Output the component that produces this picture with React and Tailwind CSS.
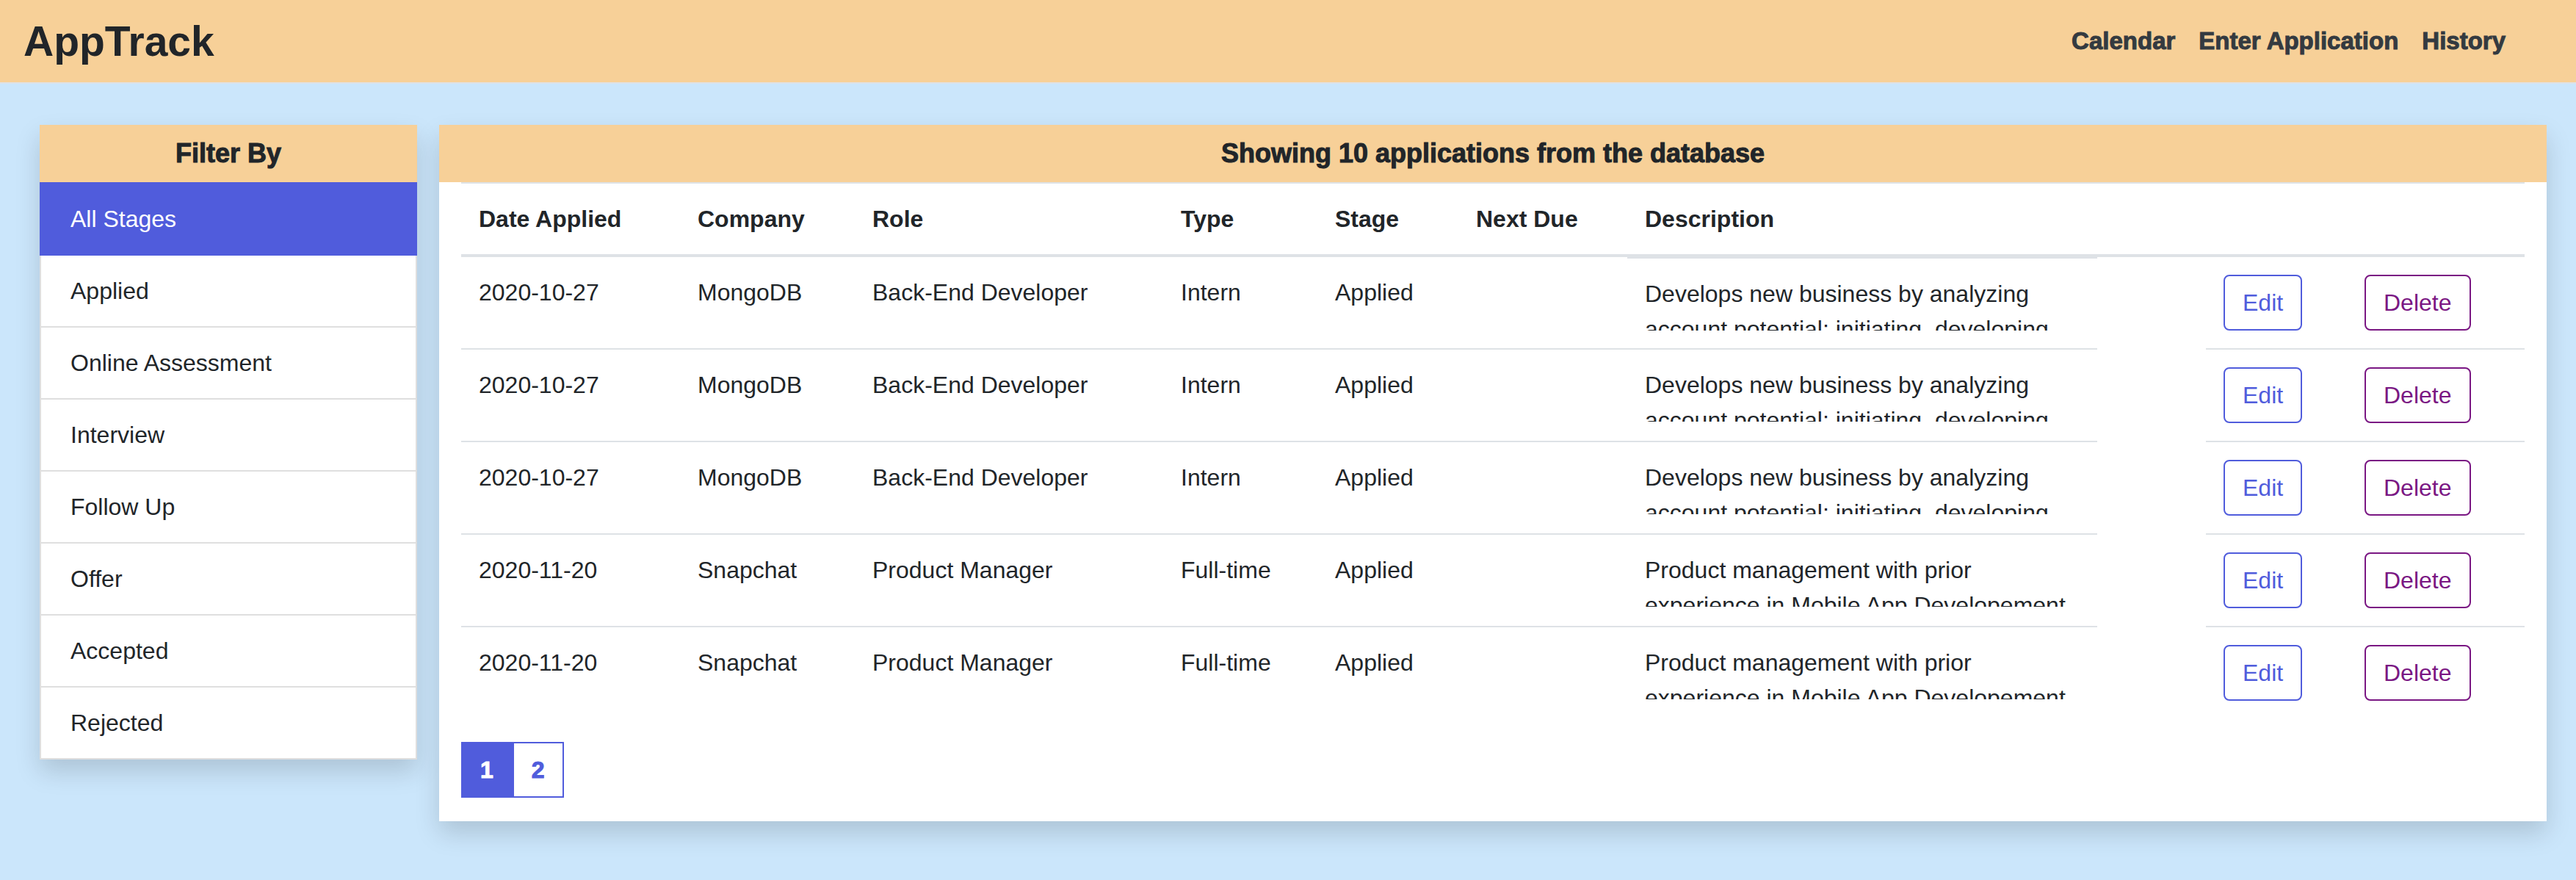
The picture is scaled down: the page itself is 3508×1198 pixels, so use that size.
const stages = [
  "All Stages",
  "Applied",
  "Online Assessment",
  "Interview",
  "Follow Up",
  "Offer",
  "Accepted",
  "Rejected",
];

const sales =
  "Develops new business by analyzing account potential; initiating, developing, and closing sales.";
const product =
  "Product management with prior experience in Mobile App Developement";

const applications = [
  { id: 1, date: "2020-10-27", company: "MongoDB", role: "Back-End Developer", type: "Intern", stage: "Applied", description: sales },
  { id: 2, date: "2020-10-27", company: "MongoDB", role: "Back-End Developer", type: "Intern", stage: "Applied", description: sales },
  { id: 3, date: "2020-10-27", company: "MongoDB", role: "Back-End Developer", type: "Intern", stage: "Applied", description: sales },
  { id: 4, date: "2020-11-20", company: "Snapchat", role: "Product Manager", type: "Full-time", stage: "Applied", description: product },
  { id: 5, date: "2020-11-20", company: "Snapchat", role: "Product Manager", type: "Full-time", stage: "Applied", description: product },
];

const columns = [
  { label: "Date Applied", width: "w-[298px]" },
  { label: "Company", width: "w-[238px]" },
  { label: "Role", width: "w-[420px]" },
  { label: "Type", width: "w-[210px]" },
  { label: "Stage", width: "w-[192px]" },
  { label: "Next Due", width: "w-[230px]" },
  { label: "Description", width: "" },
  { label: "", width: "w-[192px]" },
  { label: "", width: "w-[242px]" },
];

function Header() {
  return (
    <header className="flex items-center justify-between border-b-2 border-[#dee2e6] bg-[#f7d098] py-3.5 pl-8 pr-20">
      <a href="#" className="text-[57px] font-bold leading-[84px]">
        AppTrack
      </a>
      <nav className="flex text-[33px] font-bold leading-[48px] text-[#343a40] [-webkit-text-stroke:1px_#343a40]">
        <a href="#calendar" className="px-4">Calendar</a>
        <a href="#enter" className="px-4">Enter Application</a>
        <a href="#history" className="px-4">History</a>
      </nav>
    </header>
  );
}

function CardTitle({ children }) {
  return (
    <h2 className="bg-[#f7d098] py-3 text-center text-[36px] font-bold leading-[54px] [-webkit-text-stroke:1px_#212529]">
      {children}
    </h2>
  );
}

function Filters() {
  return (
    <aside className="w-[514px] shrink-0 bg-white shadow-[0_16px_32px_rgba(0,0,0,0.15)]">
      <CardTitle>Filter By</CardTitle>
      <ul>
        {stages.map((stage, i) => (
          <li key={stage}>
            <button
              type="button"
              className={
                i === 0
                  ? "block w-full border-2 border-[#505cdc] bg-[#505cdc] px-10 py-6 text-left text-white"
                  : "block w-full border-x-2 border-b-2 border-[#dfdfdf] bg-white px-10 py-6 text-left"
              }
            >
              {stage}
            </button>
          </li>
        ))}
      </ul>
    </aside>
  );
}

function Row({ app, first }) {
  const line = first ? "" : "border-t-2 border-[#dee2e6]";
  return (
    <tr className="align-top">
      <td className={`p-6 ${line}`}>{app.date}</td>
      <td className={`p-6 ${line}`}>{app.company}</td>
      <td className={`p-6 ${line}`}>{app.role}</td>
      <td className={`p-6 ${line}`}>{app.type}</td>
      <td className={`p-6 ${line}`}>{app.stage}</td>
      <td className={`p-6 ${line}`}></td>
      <td className="p-0">
        <div className="max-w-[640px] border-t-2 border-[#dee2e6] px-6 pt-6">
          <p className="h-[74px] overflow-hidden">{app.description}</p>
        </div>
      </td>
      <td className={`p-6 ${line}`}>
        <button type="button" className="block rounded-lg border-2 border-[#505cdc] px-6 py-3 text-[#505cdc]">
          Edit
        </button>
      </td>
      <td className={`p-6 ${line}`}>
        <button type="button" className="block rounded-lg border-2 border-[#7a1783] px-6 py-3 text-[#7a1783]">
          Delete
        </button>
      </td>
    </tr>
  );
}

function Applications() {
  return (
    <section className="min-w-0 flex-1 bg-white shadow-[0_16px_32px_rgba(0,0,0,0.15)]">
      <CardTitle>Showing 10 applications from the database</CardTitle>
      <div className="px-[30px] pb-8">
        <table className="w-full table-fixed border-separate border-spacing-0">
          <thead>
            <tr>
              {columns.map((c, i) => (
                <th
                  key={i}
                  className={`border-b-4 border-t-2 border-[#dee2e6] p-6 text-left font-bold ${c.width}`}
                >
                  {c.label}
                </th>
              ))}
            </tr>
          </thead>
          <tbody>
            {applications.map((app, i) => (
              <Row key={app.id} app={app} first={i === 0} />
            ))}
          </tbody>
        </table>
        <nav aria-label="Pages" className="mt-8 flex font-bold">
          <button type="button" className="border-2 border-[#505cdc] bg-[#505cdc] px-6 py-3 text-white [-webkit-text-stroke:1px_#ffffff]">
            1
          </button>
          <button type="button" className="border-2 border-[#505cdc] bg-white px-6 py-3 text-[#505cdc] [-webkit-text-stroke:1px_#505cdc]">
            2
          </button>
        </nav>
      </div>
    </section>
  );
}

export default function App() {
  return (
    <div className="min-h-screen bg-[#cbe6fb] font-['Liberation_Sans',Arial,sans-serif] text-[32px] leading-[48px] text-[#212529]">
      <Header />
      <main className="flex items-start gap-[30px] pb-20 pl-[54px] pr-10 pt-14">
        <Filters />
        <Applications />
      </main>
    </div>
  );
}
